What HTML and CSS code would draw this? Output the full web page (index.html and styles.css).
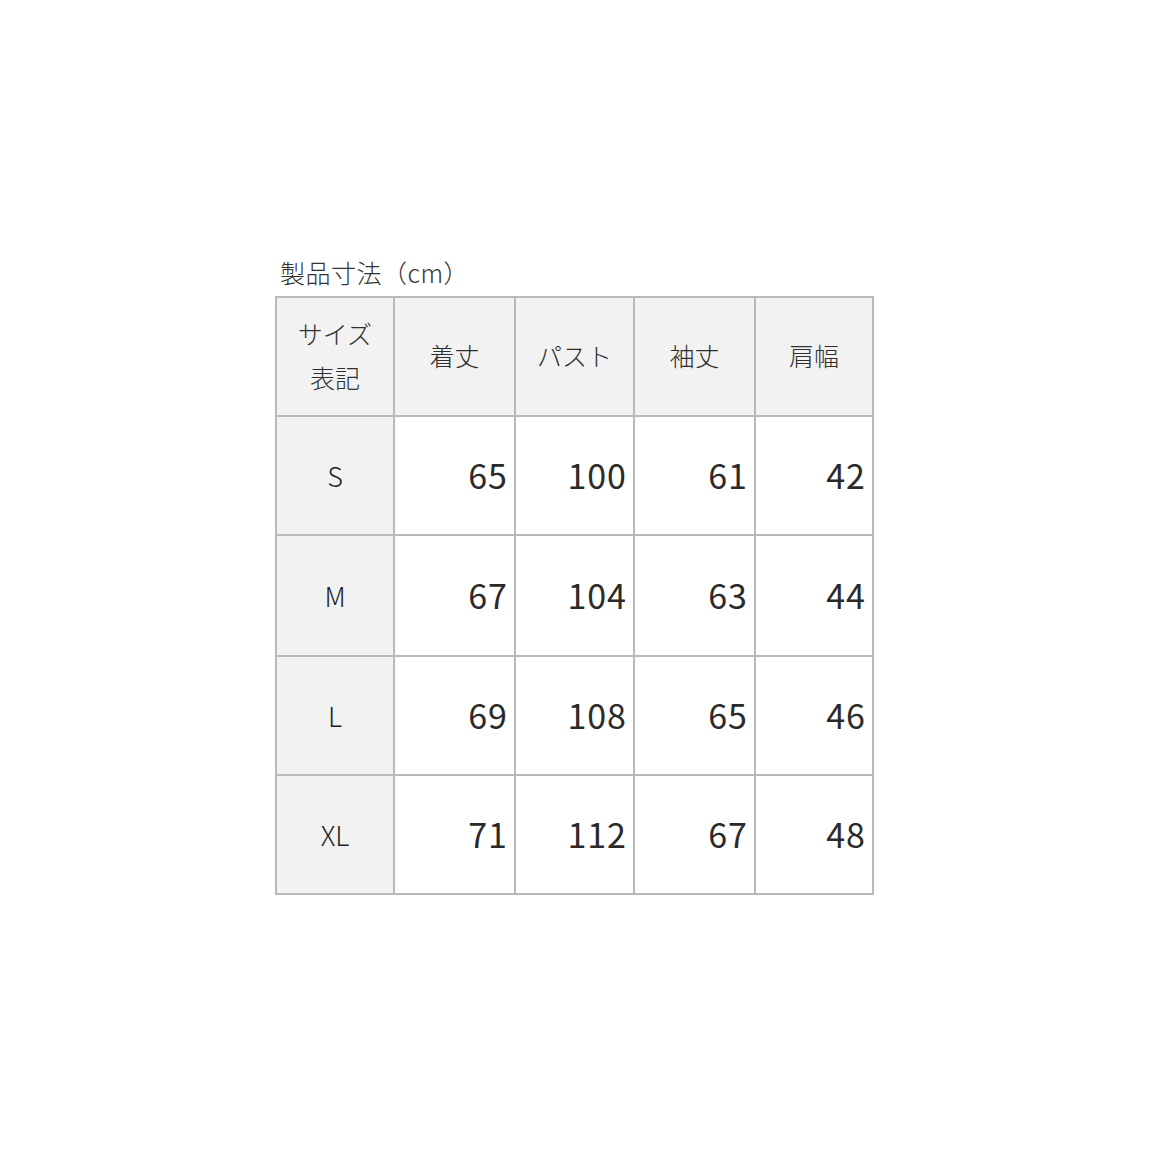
FILE: index.html
```html
<!DOCTYPE html>
<html lang="ja">
<head>
<meta charset="utf-8">
<link rel="stylesheet" href="styles.css">
</head>
<body>
<div class="wrap">
  <div class="title">製品寸法（cm）</div>
  <table class="size-table">
    <colgroup>
      <col class="c1"><col class="c2"><col class="c3"><col class="c4"><col class="c5">
    </colgroup>
    <thead>
      <tr>
        <th class="hd">サイズ<br>表記</th>
        <th class="hd">着丈</th>
        <th class="hd">パスト</th>
        <th class="hd">袖丈</th>
        <th class="hd">肩幅</th>
      </tr>
    </thead>
    <tbody>
      <tr><th class="sz">S</th><td>65</td><td>100</td><td>61</td><td>42</td></tr>
      <tr class="tall"><th class="sz">M</th><td>67</td><td>104</td><td>63</td><td>44</td></tr>
      <tr><th class="sz">L</th><td>69</td><td>108</td><td>65</td><td>46</td></tr>
      <tr><th class="sz">XL</th><td>71</td><td>112</td><td>67</td><td>48</td></tr>
    </tbody>
  </table>
</div>
</body>
</html>
```

FILE: styles.css
```css
html, body {
  margin: 0;
  padding: 0;
  background: #ffffff;
}
body {
  font-family: "Noto Sans CJK JP", "Noto Sans", sans-serif;
  color: #222222;
}
.wrap {
  padding-top: 255px;
  padding-left: 275px;
}
.title {
  font-size: 25px;
  line-height: 34px;
  color: #333333;
  font-weight: 300;
  padding-left: 5px;
  margin-bottom: 7px;
  letter-spacing: 0.5px;
}
.size-table {
  border-collapse: collapse;
  table-layout: fixed;
  width: 597px;
}
.c1 { width: 118px; }
.c2 { width: 121px; }
.c3 { width: 119px; }
.c4 { width: 121px; }
.c5 { width: 118px; }
.size-table th,
.size-table td {
  border: 2px solid #b9b9b9;
  padding: 0;
  vertical-align: middle;
}
.size-table .sz {
  height: 117px;
}
.size-table td {
  height: 114px;
}
.size-table .tall .sz {
  height: 119px;
}
.size-table .tall td {
  height: 116px;
}
.hd {
  background: #f2f2f2;
  font-weight: 300;
  font-size: 25px;
  line-height: 44px;
  text-align: center;
  color: #2e2e2e;
}
.size-table .hd {
  height: 113px;
  padding-bottom: 4px;
}
.sz {
  background: #f2f2f2;
  font-weight: 300;
  font-size: 27px;
  text-align: center;
  color: #1e1e1e;
}
.size-table td {
  font-size: 34px;
  font-weight: 400;
  text-align: right;
  padding-right: 6px;
  padding-bottom: 3px;
  letter-spacing: 1px;
  color: #2a2a2a;
}
```
